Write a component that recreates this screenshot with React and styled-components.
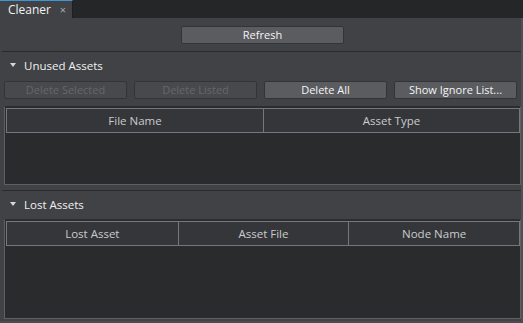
import React from "react";
import styled, { createGlobalStyle } from "styled-components";

const Global = createGlobalStyle`
  html, body { margin: 0; padding: 0; background: #252628; }
  body { font-family: "Open Sans", "Noto Sans", sans-serif; font-size: 11px; }
  #root { width: 523px; height: 323px; }
`;

const Window = styled.div`
  width: 523px;
  height: 323px;
  display: flex;
  flex-direction: column;
  background: #252628;
  overflow: hidden;
`;

const TabBar = styled.div`
  height: 18px;
  display: flex;
  align-items: stretch;
  flex: none;
`;

const Tab = styled.div`
  width: 73px;
  box-sizing: border-box;
  background: #404246;
  border-top: 1px solid #3f94d2;
  border-right: 1px solid #1e1f21;
  display: flex;
  align-items: center;
  justify-content: space-between;
  padding: 0 6px 0 8px;
  color: #f2f2f2;
  font-size: 12px;
`;

const Close = styled.span`
  color: #a8aaad;
  font-size: 11px;
  line-height: 1;
`;

const Panel = styled.div`
  flex: 1;
  display: flex;
  flex-direction: column;
  background: #404246;
  border-right: 2px solid #4e5054;
  border-bottom: 2px solid #4a4c50;
  min-height: 0;
`;

const TopRow = styled.div`
  padding: 8px 0 0 181px;
  display: flex;
`;

const Button = styled.button`
  box-sizing: border-box;
  width: ${(p) => p.$w || 123}px;
  height: 18px;
  margin: 0;
  padding: 0;
  border: 1px solid #333437;
  border-radius: 2px;
  background: ${(p) => (p.disabled ? "#47494d" : "#5a5c60")};
  color: ${(p) => (p.disabled ? "#65676b" : "#f4f4f4")};
  font-family: inherit;
  font-size: 11px;
  line-height: 16px;
  text-align: center;
  white-space: nowrap;
`;

const Separator = styled.div`
  height: 1px;
  background: #2a2b2d;
  margin: ${(p) => p.$top}px 0 0 2px;
  flex: none;
`;

const SectionHeader = styled.div`
  height: 26px;
  display: flex;
  align-items: center;
  padding-left: 10px;
  gap: 8px;
  color: #f0f0f0;
  font-size: 11.5px;
  flex: none;
`;

const Arrow = styled.span`
  width: 0;
  height: 0;
  border-left: 3.5px solid transparent;
  border-right: 3.5px solid transparent;
  border-top: 4px solid #d8d8d8;
`;

const ButtonRow = styled.div`
  display: flex;
  gap: 7px;
  padding-left: 4px;
  margin-top: 3px;
  flex: none;
`;

const Table = styled.div`
  margin: ${(p) => p.$top}px 0 0 4px;
  display: flex;
  flex-direction: column;
  background: #2a2b2d;
  border: 1px solid #5e6064;
  border-top-color: #2c2d2f;
  padding: 1px 0 0 1px;
  flex: ${(p) => (p.$grow ? "1" : "none")};
  height: ${(p) => (p.$h ? p.$h + "px" : "auto")};
  box-sizing: border-box;
`;

const HeaderRow = styled.div`
  height: 25px;
  box-sizing: border-box;
  display: grid;
  grid-template-columns: repeat(${(p) => p.$cols}, 1fr);
  border: 1px solid #75777b;
  background: #353639;
  flex: none;
`;

const HeaderCell = styled.div`
  display: flex;
  align-items: center;
  justify-content: center;
  color: #c9cbce;
  font-size: 11.5px;
  & + & { border-left: 1px solid #75777b; }
`;

const Body = styled.div`
  flex: 1;
`;

export default function App() {
  return (
    <Window>
      <Global />
      <TabBar>
        <Tab>
          <span>Cleaner</span>
          <Close>×</Close>
        </Tab>
      </TabBar>
      <Panel>
        <TopRow>
          <Button $w={163}>Refresh</Button>
        </TopRow>
        <Separator $top={7} />
        <SectionHeader>
          <Arrow />
          <span>Unused Assets</span>
        </SectionHeader>
        <ButtonRow>
          <Button disabled>Delete Selected</Button>
          <Button disabled>Delete Listed</Button>
          <Button>Delete All</Button>
          <Button>Show Ignore List...</Button>
        </ButtonRow>
        <Table $top={7} $h={79}>
          <HeaderRow $cols={2}>
            <HeaderCell>File Name</HeaderCell>
            <HeaderCell>Asset Type</HeaderCell>
          </HeaderRow>
          <Body />
        </Table>
        <Separator $top={5} />
        <SectionHeader>
          <Arrow />
          <span>Lost Assets</span>
        </SectionHeader>
        <Table $top={2} $grow>
          <HeaderRow $cols={3}>
            <HeaderCell>Lost Asset</HeaderCell>
            <HeaderCell>Asset File</HeaderCell>
            <HeaderCell>Node Name</HeaderCell>
          </HeaderRow>
          <Body />
        </Table>
        <BottomGap />
      </Panel>
    </Window>
  );
}

const BottomGap = styled.div`
  height: 2px;
  flex: none;
`;
